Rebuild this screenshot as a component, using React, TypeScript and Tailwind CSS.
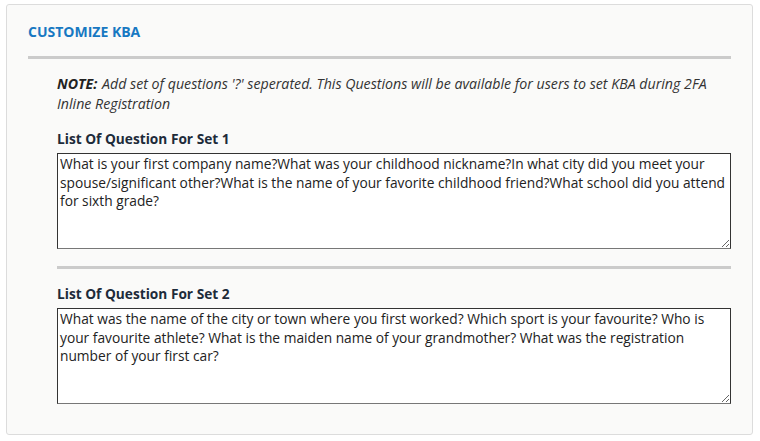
import React from 'react';

const q1 =
  'What is your first company name?What was your childhood nickname?In what city did you meet your spouse/significant other?What is the name of your favorite childhood friend?What school did you attend for sixth grade?';
const q2 =
  'What was the name of the city or town where you first worked? Which sport is your favourite? Who is your favourite athlete? What is the maiden name of your grandmother? What was the registration number of your first car?';

function QuestionSet({ label, value }: { label: string; value: string }) {
  return (
    <div>
      <label className="block text-[13.7px] font-bold text-[#1d2b3a] leading-5 mb-[4px]">{label}</label>
      <textarea
        defaultValue={value}
        className="block w-full h-[96px] bg-white border border-[#333] border-b-[#777] px-[2px] py-[1px] text-[13.75px] leading-[18.5px] text-[#222] resize-y outline-none"
        style={{ fontFamily: '"Open Sans", sans-serif' }}
      />
    </div>
  );
}

export default function App() {
  return (
    <div className="w-[760px] h-[441px] bg-white pt-[4px] pl-[6px]" style={{ fontFamily: '"Open Sans", "Noto Sans", sans-serif' }}>
      <div className="w-[747px] h-[431px] bg-[#fafaf9] border border-[#dcdcdc] rounded-[3px] px-[21px] pt-[17px]">
        <h2 className="text-[14px] font-bold text-[#1778c2] leading-5">CUSTOMIZE KBA</h2>
        <div className="mt-[14px] h-[3px] bg-[#cbcbcb]" />
        <div className="pl-[29px] pt-[15px]">
          <p className="text-[14.2px] italic text-[#333] leading-5">
            <span className="font-bold text-[#222] mr-[1px]">NOTE:</span> Add set of questions '?' seperated. This Questions will be available for users to set KBA during 2FA Inline Registration
          </p>
          <div className="mt-[15px]">
            <QuestionSet label="List Of Question For Set 1" value={q1} />
          </div>
          <div className="mt-[17px] h-[3px] bg-[#cbcbcb]" />
          <div className="mt-[15px]">
            <QuestionSet label="List Of Question For Set 2" value={q2} />
          </div>
        </div>
      </div>
    </div>
  );
}
